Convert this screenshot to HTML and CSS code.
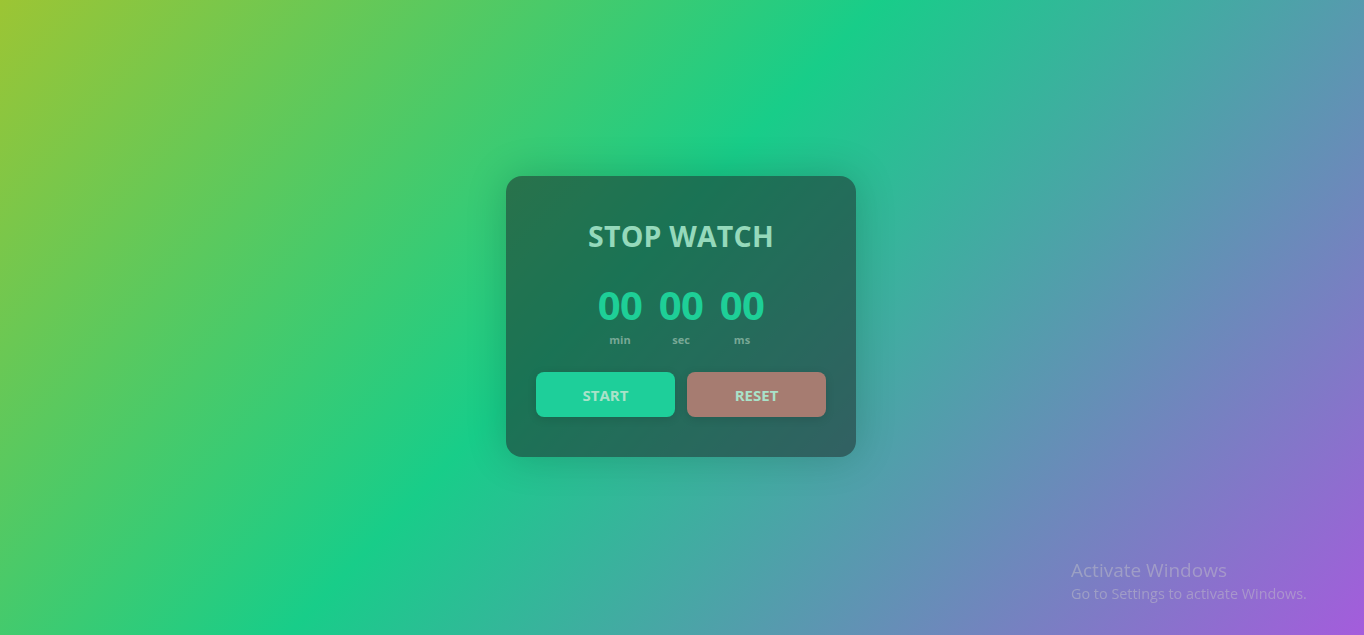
FILE: index.html
```html
<!DOCTYPE html>
<html>
<head>
<meta charset="utf-8">
<link rel="stylesheet" href="styles.css">
</head>
<body>
<main class="page">
  <section class="card">
    <h1 class="title">STOP WATCH</h1>
    <div class="timer">
      <div class="unit"><span class="num">00</span><span class="lbl">min</span></div>
      <div class="unit"><span class="num">00</span><span class="lbl">sec</span></div>
      <div class="unit"><span class="num">00</span><span class="lbl">ms</span></div>
    </div>
    <div class="buttons">
      <button class="btn start">START</button>
      <button class="btn reset">RESET</button>
    </div>
  </section>
</main>
<div class="activate">
  <div class="act-title">Activate Windows</div>
  <div class="act-sub">Go to Settings to activate Windows.</div>
</div>
</body>
</html>
```
FILE: styles.css
```css
* { box-sizing: border-box; }
html, body { margin: 0; height: 100%; }
body {
  font-family: "Open Sans", "Noto Sans", sans-serif;
  background: linear-gradient(133deg, #9cc534 0%, #18cd89 45%, #a45cdc 100%);
  overflow: hidden;
}
.page {
  height: 100%;
  display: flex;
  justify-content: center;
  padding-top: 176px;
  padding-right: 2px;
}
.card {
  width: 350px;
  height: 281px;
  border-radius: 16px;
  background: rgba(30, 42, 42, 0.55);
  box-shadow: 0 0 40px rgba(0, 0, 0, 0.18);
  padding: 41px 30px 40px;
  display: flex;
  flex-direction: column;
  align-items: center;
}
.title {
  margin: 0;
  font-size: 28.5px;
  font-weight: 700;
  color: #95d9bb;
  line-height: 38px;
  letter-spacing: 0.2px;
}
.timer {
  display: flex;
  gap: 6px;
  margin-top: 27px;
}
.unit {
  display: flex;
  flex-direction: column;
  align-items: center;
  width: 55px;
}
.num {
  font-size: 40px;
  font-weight: 700;
  line-height: 46px;
  color: #1ecf97;
  letter-spacing: -0.5px;
}
.lbl {
  font-size: 11px;
  font-weight: 700;
  color: #78a896;
  line-height: 14px;
  margin-top: 5px;
}
.buttons {
  display: flex;
  gap: 12px;
  margin-top: 25px;
  width: 100%;
}
.btn {
  flex: 1;
  height: 45px;
  border: none;
  border-radius: 8px;
  font-family: inherit;
  font-size: 15px;
  font-weight: 700;
  color: #a9e2c9;
  box-shadow: 0 2px 10px rgba(0, 0, 0, 0.12);
}
.start { background: #1ecf9a; }
.reset { background: #a67c71; }
.activate {
  position: fixed;
  left: 1071px;
  top: 558px;
  color: rgba(200, 200, 200, 0.45);
  font-family: "Open Sans", "Noto Sans", sans-serif;
}
.act-title { font-size: 19px; line-height: 25px; }
.act-sub { font-size: 14.4px; line-height: 21px; }
```
